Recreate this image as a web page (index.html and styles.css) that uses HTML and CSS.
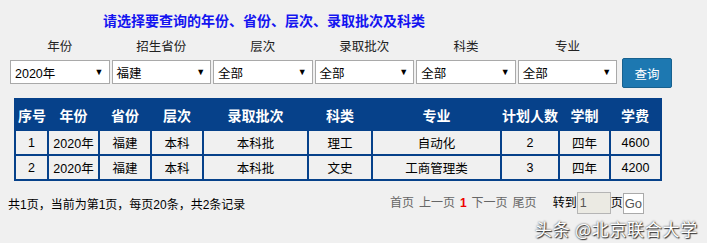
FILE: index.html
```html
<!DOCTYPE html>
<html lang="zh-CN">

<head>
    <meta charset="UTF-8">
    <link rel="stylesheet" href="styles.css">
    <title>录取查询</title>
</head>

<body>

    <div class="query-page">
        <h3 class="title">请选择要查询的年份、省份、层次、录取批次及科类</h3>

        <div class="filters">
            <div class="field">
                <label>年份</label>
                <div class="select"><span>2020年</span><i>▼</i></div>
            </div>
            <div class="field">
                <label>招生省份</label>
                <div class="select"><span>福建</span><i>▼</i></div>
            </div>
            <div class="field">
                <label>层次</label>
                <div class="select"><span>全部</span><i>▼</i></div>
            </div>
            <div class="field">
                <label>录取批次</label>
                <div class="select"><span>全部</span><i>▼</i></div>
            </div>
            <div class="field">
                <label>科类</label>
                <div class="select"><span>全部</span><i>▼</i></div>
            </div>
            <div class="field">
                <label>专业</label>
                <div class="select"><span>全部</span><i>▼</i></div>
            </div>
            <button class="btn-query">查询</button>
        </div>

        <table class="result">
            <colgroup>
                <col style="width:33px">
                <col style="width:51px">
                <col style="width:52px">
                <col style="width:52px">
                <col style="width:105px">
                <col style="width:64px">
                <col style="width:129px">
                <col style="width:58px">
                <col style="width:51px">
                <col style="width:51px">
            </colgroup>
            <thead>
                <tr>
                    <th>序号</th>
                    <th>年份</th>
                    <th>省份</th>
                    <th>层次</th>
                    <th>录取批次</th>
                    <th>科类</th>
                    <th>专业</th>
                    <th>计划人数</th>
                    <th>学制</th>
                    <th>学费</th>
                </tr>
            </thead>
            <tbody>
                <tr>
                    <td>1</td>
                    <td>2020年</td>
                    <td>福建</td>
                    <td>本科</td>
                    <td>本科批</td>
                    <td>理工</td>
                    <td>自动化</td>
                    <td>2</td>
                    <td>四年</td>
                    <td>4600</td>
                </tr>
                <tr>
                    <td>2</td>
                    <td>2020年</td>
                    <td>福建</td>
                    <td>本科</td>
                    <td>本科批</td>
                    <td>文史</td>
                    <td>工商管理类</td>
                    <td>3</td>
                    <td>四年</td>
                    <td>4200</td>
                </tr>
            </tbody>
        </table>

        <div class="pager">
            <div class="summary">共1页，当前为第1页，每页20条，共2条记录</div>
            <div class="links">
                <a>首页</a>
                <a>上一页</a>
                <b>1</b>
                <a>下一页</a>
                <a>尾页</a>
                <span class="goto">转到<input type="text" value="1">页<button>Go</button></span>
            </div>
        </div>
    </div>

    <div class="watermark">头条 @北京联合大学</div>

</body>

</html>
```

FILE: styles.css
```css
body {
    font-family: 'Liberation Sans', 'Noto Sans CJK SC', sans-serif;
    background-color: #f0f0f0;
    color: #000;
    margin: 0;
    font-size: 12.5px;
}

.query-page {
    padding: 0 0 0 8px;
    width: 664px;
}

.title {
    margin: 0;
    padding: 11px 0 0 95px;
    height: 20px;
    line-height: 20px;
    font-size: 14px;
    font-weight: bold;
    color: #1414f0;
}

.filters {
    display: flex;
    align-items: flex-end;
    gap: 2px;
    padding-left: 2px;
    margin-top: 7px;
}

.field {
    display: flex;
    flex-direction: column;
    width: 100px;
}

.field label {
    text-align: center;
    line-height: 18px;
    height: 18px;
    margin-bottom: 4px;
    color: #222;
}

.select {
    box-sizing: border-box;
    height: 24px;
    background-color: #fff;
    border: 1px solid #a9a9a9;
    display: flex;
    align-items: center;
    justify-content: space-between;
    padding: 0 5px 0 4px;
}

.select i {
    font-style: normal;
    font-size: 9px;
}

.btn-query {
    margin-left: 3px;
    margin-bottom: -4px;
    width: 50px;
    height: 30px;
    background-color: #1d78b1;
    border: 1px solid #17618f;
    border-radius: 2px;
    color: #fff;
    font-family: inherit;
    font-size: 12.5px;
    padding: 0;
}

.result {
    border-collapse: collapse;
    table-layout: fixed;
    width: 646px;
    margin: 14px 0 0 6px;
    border: 2px solid #06418a;
}

.result th {
    background-color: #06418a;
    color: #fff;
    font-size: 14px;
    font-weight: bold;
    height: 29px;
    padding: 0;
    text-align: center;
    white-space: nowrap;
}

.result td {
    border: 2px solid #06418a;
    height: 23px;
    padding: 0;
    text-align: center;
}

.pager {
    display: flex;
    justify-content: space-between;
    align-items: flex-start;
    margin-top: 11px;
    font-size: 12px;
}

.summary {
    line-height: 20px;
    margin-top: 3px;
}

.links {
    display: flex;
    align-items: center;
    margin-right: 28px;
    line-height: 20px;
}

.links a {
    color: #666;
    margin-right: 5px;
}

.links b {
    color: #e00;
    margin-right: 5px;
}

.goto {
    display: flex;
    align-items: center;
    margin-left: 11px;
}

.goto input {
    box-sizing: border-box;
    width: 34px;
    height: 22px;
    background-color: #ebeae3;
    border: 1px solid #b5b5b5;
    font-family: inherit;
    font-size: 12.5px;
    color: #555;
    padding: 0 2px;
    margin: 0;
}

.goto button {
    box-sizing: border-box;
    height: 21px;
    padding: 0 1px;
    background-color: #fff;
    border: 1px solid #aaa;
    font-family: inherit;
    font-size: 13px;
    color: #555;
}

.watermark {
    position: absolute;
    left: 535px;
    top: 216px;
    font-family: 'Noto Sans CJK SC', sans-serif;
    font-size: 17px;
    color: #fff;
    text-shadow: 0 0 2px #333, 1px 1px 1px #333;
    letter-spacing: 0.7px;
}
```
